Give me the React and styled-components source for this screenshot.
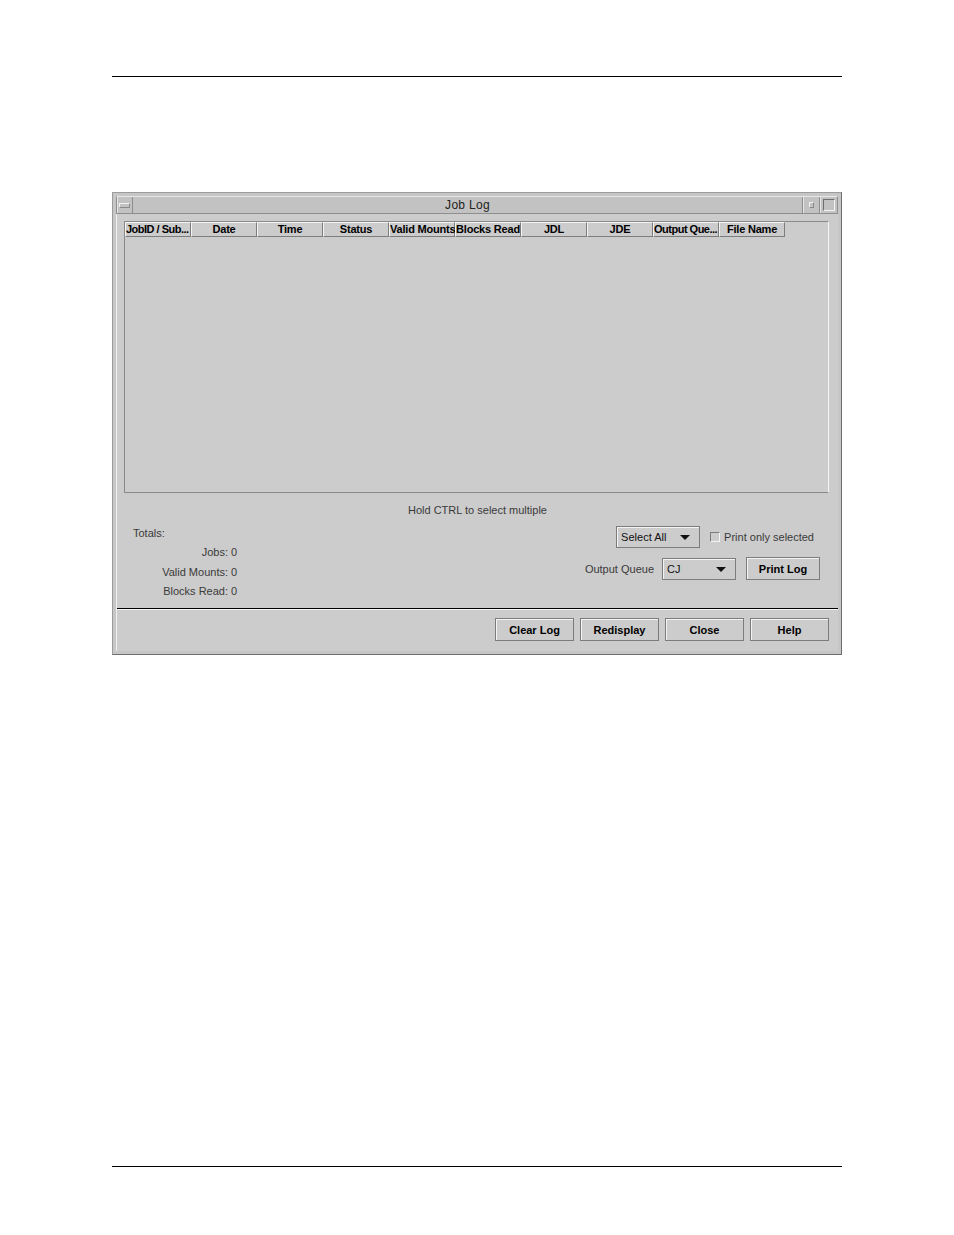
import styled, { createGlobalStyle } from "styled-components"

const GlobalStyle = createGlobalStyle`
body {
  margin: 0;
  background: #ffffff;
  font-family: "Liberation Sans", Arial, sans-serif;
}
`

const Page = styled.div`
width: 954px;
height: 1235px;
background: #fff;
display: flex;
flex-direction: column;
padding: 0 112px;
box-sizing: border-box;
`

const Rule = styled.div`
height: 1px;
background: #000;
margin-top: ${(p) => p.$top}px;
`

const Window = styled.div`
margin-top: 115px;
height: 463px;
box-sizing: border-box;
border: 1px solid #9c9c9c;
border-right-color: #6e6e6e;
border-bottom-color: #6e6e6e;
background: #c6c6c6;
padding: 3px 3px 3px 3px;
display: flex;
flex-direction: column;
`

const TitleBar = styled.div`
height: 18px;
display: flex;
align-items: stretch;
background: #c2c2c2;
border: 1px solid #8e8e8e;
border-top-color: #e8e8e8;
box-sizing: border-box;
`

const FrameButton = styled.div`
width: ${(p) => p.$w}px;
display: flex;
align-items: center;
justify-content: center;
border-left: ${(p) => (p.$right ? "1px solid #8e8e8e" : "none")};
border-right: ${(p) => (p.$right ? "none" : "1px solid #8e8e8e")};
box-shadow: inset 1px 0 #e6e6e6;
`

const Dash = styled.div`
width: 9px;
height: 3px;
border: 1px solid #8a8a8a;
border-top-color: #f2f2f2;
border-left-color: #f2f2f2;
`

const Dot = styled.div`
width: 3px;
height: 4px;
border: 1px solid #8a8a8a;
border-top-color: #f2f2f2;
border-left-color: #f2f2f2;
`

const Square = styled.div`
width: 10px;
height: 10px;
border: 1px solid #6e6e6e;
border-bottom-color: #f2f2f2;
border-right-color: #f2f2f2;
`

const Title = styled.div`
flex: 1;
text-align: center;
font-size: 12px;
line-height: 16px;
color: #222;
letter-spacing: 0.3px;
`

const Content = styled.div`
flex: 1;
background: #cccccc;
display: flex;
flex-direction: column;
border-left: 1px solid #f0f0f0;
`

const Table = styled.div`
margin: 7px 9px 0 7px;
height: 272px;
box-sizing: border-box;
border: 1px solid #8a8a8a;
border-right-color: #f4f4f4;
background: #cccccc;
`

const HeaderRow = styled.div`
display: flex;
`

const HeaderCell = styled.div`
width: 66px;
height: 15px;
box-sizing: border-box;
border-top: 1px solid #f4f4f4;
border-left: 1px solid #f4f4f4;
border-right: 1px solid #7c7c7c;
border-bottom: 1px solid #7c7c7c;
font-size: 11px;
font-weight: bold;
line-height: 13px;
text-align: ${(p) => (p.$left ? "left" : "center")};
color: #000;
white-space: nowrap;
letter-spacing: ${(p) => (p.$left ? "-0.5px" : "-0.2px")};
`

const Hint = styled.div`
margin-top: 10px;
text-align: center;
font-size: 11px;
color: #3a3a3a;
line-height: 14px;
`

const Lower = styled.div`
display: flex;
justify-content: space-between;
padding: 0 18px 0 16px;
height: 91px;
`

const Totals = styled.div`
display: grid;
grid-template-columns: 98px auto;
grid-auto-rows: 19.5px;
padding-top: 6px;
font-size: 11px;
color: #3a3a3a;
align-items: center;
`

const TotalsHead = styled.div`
grid-column: 1 / 3;
`

const TotalLabel = styled.div`
text-align: right;
padding-right: 3px;
`

const Controls = styled.div`
display: flex;
flex-direction: column;
align-items: flex-end;
padding-top: 9px;
gap: 9px;
`

const ControlRow = styled.div`
display: flex;
align-items: center;
gap: ${(p) => p.$gap}px;
font-size: 11px;
color: #3a3a3a;
`

const Dropdown = styled.div`
width: ${(p) => p.$w}px;
height: 22px;
box-sizing: border-box;
border: 1px solid #7c7c7c;
box-shadow: inset 1px 1px #f4f4f4;
display: flex;
align-items: center;
justify-content: space-between;
padding: 0 9px 0 4px;
font-size: 11px;
color: #111;
`

const Arrow = styled.div`
width: 0;
height: 0;
border-left: 5px solid transparent;
border-right: 5px solid transparent;
border-top: 5px solid #111;
margin-top: 1px;
`

const Check = styled.label`
display: flex;
align-items: center;
gap: 4px;
margin-right: 6px;
`

const Box = styled.span`
width: 10px;
height: 10px;
box-sizing: border-box;
border: 1px solid #7c7c7c;
border-right-color: #f4f4f4;
border-bottom-color: #f4f4f4;
background: #cccccc;
`

const Button = styled.div`
width: ${(p) => p.$w}px;
height: 23px;
box-sizing: border-box;
border: 1px solid #7c7c7c;
box-shadow: inset 1px 1px #f4f4f4;
display: flex;
align-items: center;
justify-content: center;
font-size: 11px;
font-weight: bold;
color: #000;
`

const Separator = styled.div`
height: 1px;
background: #000;
border-bottom: 1px solid #f4f4f4;
`

const ButtonBar = styled.div`
flex: 1;
display: flex;
justify-content: flex-end;
align-items: flex-start;
gap: 6px;
padding: 8px 9px 0 0;
`

const columns = [
  "JobID / Sub...",
  "Date",
  "Time",
  "Status",
  "Valid Mounts",
  "Blocks Read",
  "JDL",
  "JDE",
  "Output Que...",
  "File Name",
]

export default function App() {
  return (
    <Page>
      <GlobalStyle />
      <Rule $top={76} />
      <Window>
        <TitleBar>
          <FrameButton $w={15}>
            <Dash />
          </FrameButton>
          <Title>Job Log</Title>
          <FrameButton $w={16} $right>
            <Dot />
          </FrameButton>
          <FrameButton $w={17} $right>
            <Square />
          </FrameButton>
        </TitleBar>
        <Content>
          <Table>
            <HeaderRow>
              {columns.map((c) => (
                <HeaderCell key={c} $left={c.endsWith("...")}>
                  {c}
                </HeaderCell>
              ))}
            </HeaderRow>
          </Table>
          <Hint>Hold CTRL to select multiple</Hint>
          <Lower>
            <Totals>
              <TotalsHead>Totals:</TotalsHead>
              <TotalLabel>Jobs:</TotalLabel>
              <div>0</div>
              <TotalLabel>Valid Mounts:</TotalLabel>
              <div>0</div>
              <TotalLabel>Blocks Read:</TotalLabel>
              <div>0</div>
            </Totals>
            <Controls>
              <ControlRow $gap={10}>
                <Dropdown $w={84}>
                  Select All
                  <Arrow />
                </Dropdown>
                <Check>
                  <Box />
                  Print only selected
                </Check>
              </ControlRow>
              <ControlRow $gap={10}>
                <span style={{ marginRight: -2 }}>Output Queue</span>
                <Dropdown $w={74}>
                  CJ
                  <Arrow />
                </Dropdown>
                <Button $w={74}>Print Log</Button>
              </ControlRow>
            </Controls>
          </Lower>
          <Separator />
          <ButtonBar>
            <Button $w={79}>Clear Log</Button>
            <Button $w={79}>Redisplay</Button>
            <Button $w={79}>Close</Button>
            <Button $w={79}>Help</Button>
          </ButtonBar>
        </Content>
      </Window>
      <Rule $top={511} />
    </Page>
  )
}
